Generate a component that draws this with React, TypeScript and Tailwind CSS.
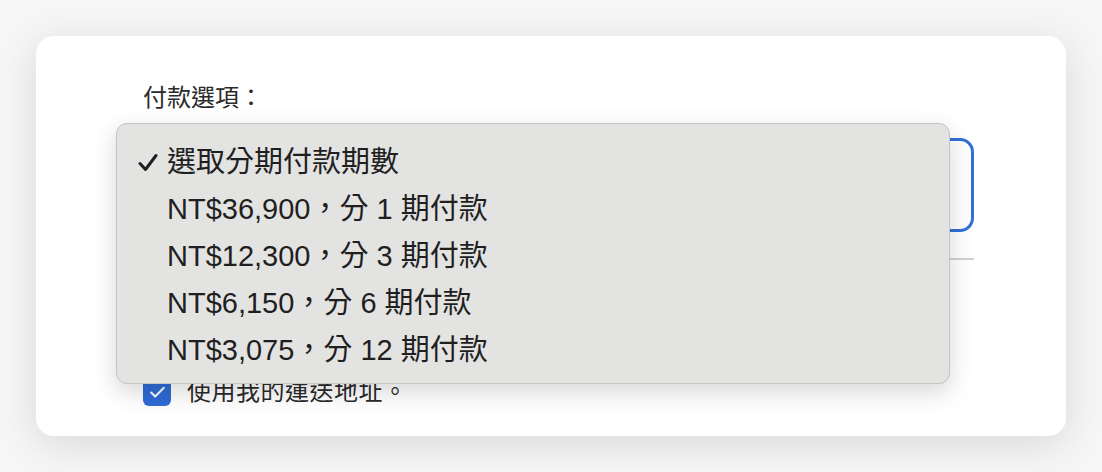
import { Check } from 'lucide-react';

const options = [
  { label: '選取分期付款期數', selected: true },
  { label: 'NT$36,900，分 1 期付款', selected: false },
  { label: 'NT$12,300，分 3 期付款', selected: false },
  { label: 'NT$6,150，分 6 期付款', selected: false },
  { label: 'NT$3,075，分 12 期付款', selected: false },
];

const font = "font-['Liberation_Sans','Noto_Sans_CJK_TC',sans-serif]";

export default function App() {
  return (
    <div className={`w-[1102px] h-[472px] bg-[#f6f6f6] pt-[36px] pl-[36px] ${font}`}>
      <div className="relative w-[1030px] h-[400px] rounded-[18px] bg-white shadow-[0_8px_40px_rgba(0,0,0,0.12)] pt-[47px] pl-[107px] pr-[92px]">
        <div className="text-[24px] leading-[30px] text-[#2a2a2a]">付款選項：</div>

        {/* select field, covered by the open menu */}
        <div className="mt-[25px] h-[94px] rounded-[14px] border-[3px] border-[#3170d6]" />
        <div className="mt-[26px] h-[2px] bg-[#d0d0d0]" />

        <div className="mt-[117px] flex items-center gap-[16px]">
          <div className="w-[28px] h-[28px] rounded-[6px] bg-[#2f6bd6] flex items-center justify-center">
            <Check className="w-[19px] h-[19px] text-white" strokeWidth={2.5} />
          </div>
          <span className="text-[24px] leading-[30px] tracking-[0.5px] text-[#2a2a2a]">使用我的運送地址。</span>
        </div>

        {/* open dropdown menu */}
        <div className="absolute left-[80px] top-[87px] w-[834px] h-[261px] rounded-[11px] border border-[#c4c4c4] bg-[#e3e3e2] shadow-[0_8px_24px_rgba(0,0,0,0.16)] pt-[15px]">
          {options.map((o) => (
            <div key={o.label} className="relative h-[47px] pl-[50px] text-[29px] leading-[47px] text-[#1f1f1f]">
              {o.selected && (
                <svg className="absolute left-[21px] top-[14px] w-[20px] h-[19px]" viewBox="0 0 20 19" fill="none">
                  <path d="M2 10.5 L7.5 16.5 L18 2.5" stroke="#1f1f1f" strokeWidth="3" strokeLinecap="round" strokeLinejoin="round" />
                </svg>
              )}
              {o.label}
            </div>
          ))}
        </div>
      </div>
    </div>
  );
}
